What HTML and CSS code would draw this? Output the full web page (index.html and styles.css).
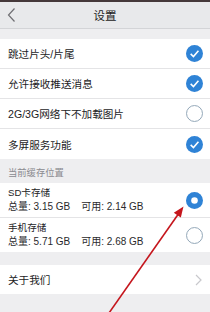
FILE: index.html
```html
<!DOCTYPE html>
<html lang="zh">
<head>
<meta charset="utf-8">
<link rel="stylesheet" href="styles.css">
</head>
<body>
<div class="page">
  <div class="topband"></div>
  <header class="header">
    <div class="back">
      <svg width="10" height="16" viewBox="0 0 10 16"><polyline points="7.5,1.5 1.5,8 7.5,14.5" fill="none" stroke="#6f6f73" stroke-width="1.2"/></svg>
    </div>
    <div class="title">设置</div>
    <div></div>
  </header>

  <div class="gap-top"></div>

  <section class="group">
    <div class="row">
      <span class="label">跳过片头/片尾</span>
      <svg class="mark" width="17" height="17" viewBox="0 0 16 16"><circle cx="8" cy="8" r="8" fill="#2f83d6"/><polyline points="4.4,8.3 7,10.8 11.7,5.4" fill="none" stroke="#fff" stroke-width="1.5"/></svg>
    </div>
    <div class="row">
      <span class="label">允许接收推送消息</span>
      <svg class="mark" width="17" height="17" viewBox="0 0 16 16"><circle cx="8" cy="8" r="8" fill="#2f83d6"/><polyline points="4.4,8.3 7,10.8 11.7,5.4" fill="none" stroke="#fff" stroke-width="1.5"/></svg>
    </div>
    <div class="row">
      <span class="label">2G/3G网络下不加载图片</span>
      <svg class="mark" width="17" height="17" viewBox="0 0 16 16"><circle cx="8" cy="8" r="7.5" fill="#fff" stroke="#8ea3b5" stroke-width="0.9"/></svg>
    </div>
    <div class="row last">
      <span class="label">多屏服务功能</span>
      <svg class="mark" width="17" height="17" viewBox="0 0 16 16"><circle cx="8" cy="8" r="8" fill="#2f83d6"/><polyline points="4.4,8.3 7,10.8 11.7,5.4" fill="none" stroke="#fff" stroke-width="1.5"/></svg>
    </div>
  </section>

  <div class="section-title">当前缓存位置</div>

  <section class="group">
    <div class="row storage sd">
      <div class="info">
        <div class="name">SD卡存储</div>
        <div class="stats"><span>总量: 3.15 GB</span><span class="avail">可用: 2.14 GB</span></div>
      </div>
      <svg class="mark" width="17" height="17" viewBox="0 0 16 16"><circle cx="8" cy="8" r="8" fill="#2f83d6"/><circle cx="8" cy="8" r="3.1" fill="#fff"/></svg>
    </div>
    <div class="row storage phone last">
      <div class="info">
        <div class="name">手机存储</div>
        <div class="stats"><span>总量: 5.71 GB</span><span class="avail">可用: 2.68 GB</span></div>
      </div>
      <svg class="mark" width="17" height="17" viewBox="0 0 16 16"><circle cx="8" cy="8" r="7.5" fill="#fff" stroke="#8ea3b5" stroke-width="0.9"/></svg>
    </div>
  </section>

  <div class="gap-mid"></div>

  <section class="group">
    <div class="row about last">
      <span class="label">关于我们</span>
      <svg class="chev" width="7" height="12" viewBox="0 0 7 12"><polyline points="1,1 6,6 1,11" fill="none" stroke="#c8c8cc" stroke-width="1.2"/></svg>
    </div>
  </section>

  <svg class="arrow" width="210" height="312" viewBox="0 0 210 312">
    <line x1="178.2" y1="214.2" x2="109" y2="313" stroke="#c5161d" stroke-width="1.6"/>
    <polygon points="183.5,206.5 180.8,217.6 173.8,212.8" fill="#c5161d"/>
  </svg>
</div>
</body>
</html>
```

FILE: styles.css
```css
html, body {
  margin: 0;
  padding: 0;
}
body {
  background: #eeeef0;
  font-family: "Liberation Sans", "Noto Sans CJK SC", sans-serif;
  color: #1c1c1e;
}
.page {
  position: relative;
  width: 210px;
  height: 312px;
  overflow: hidden;
  background: #eeeef0;
}
.topband {
  height: 2px;
  background: #45383a;
}
.header {
  height: 26px;
  background: #e8e9eb;
  border-bottom: 1px solid #d3d4d7;
  display: grid;
  grid-template-columns: 40px 1fr 40px;
  align-items: center;
}
.back {
  padding-left: 7px;
  display: flex;
  align-items: center;
  height: 26px;
}
.title {
  text-align: center;
  font-size: 11.5px;
  color: #222;
}
.gap-top {
  height: 10px;
}
.group {
  background: #fff;
}
.row {
  height: 29px;
  border-bottom: 1px solid #e4e4e6;
  display: flex;
  align-items: center;
  justify-content: space-between;
  padding: 0 7px 0 8px;
}
.row.last {
  border-bottom: none;
  height: 30px;
}
.label {
  font-size: 10.6px;
  color: #1c1c1e;
}
.mark {
  flex: none;
}
.section-title {
  height: 24px;
  display: flex;
  align-items: center;
  padding: 1px 0 0 8px;
  box-sizing: border-box;
  font-size: 9.3px;
  color: #8a8a8f;
}
.storage.sd {
  height: 34px;
}
.storage.phone {
  height: 34px;
}
.info {
  display: flex;
  flex-direction: column;
  gap: 3px;
}
.name {
  font-size: 9.6px;
  line-height: 11px;
  color: #1c1c1e;
}
.stats {
  font-size: 10px;
  line-height: 12px;
  color: #2a2a2c;
}
.avail {
  margin-left: 11px;
}
.gap-mid {
  height: 13px;
}
.about {
  height: 29px;
}
.row.about.last {
  height: 29px;
}
.chev {
  margin-right: 1px;
}
.arrow {
  position: absolute;
  left: 0;
  top: 0;
  pointer-events: none;
}
```
